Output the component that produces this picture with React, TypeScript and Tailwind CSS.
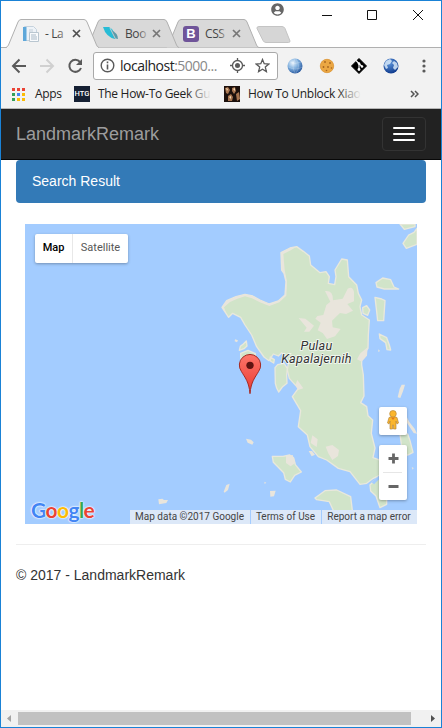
import React from "react";
import { FaUserCircle } from "react-icons/fa";

const UI = "font-['Open_Sans','Noto_Sans',sans-serif]";
const GREY = "#5a5a5a";

function Tab({ active, title, icon, z, fade }: { active?: boolean; title: string; icon: React.ReactNode; z: string; fade: string }) {
  return (
    <div className={"relative -mr-[13px] h-[29px] w-[93px] shrink-0 " + z}>
      <svg className="absolute inset-0" width="93" height="29" viewBox="0 0 93 29">
        <path
          d="M0 28.5 Q1.5 28 2.5 26 L12 3 Q13 .5 15 .5 H78 Q80 .5 81 3 L90.500 26 Q91.500 28.500 93 28.500"
          fill={active ? "#f2f2f2" : "#d9d9d9"}
          stroke="#b0b0b0"
        />
        {active && <path d="M1 28.500H92" stroke="#f2f2f2" />}
      </svg>
      <div className="relative flex h-[29px] items-center pl-[17px]">
        <span className="flex h-4 w-4 shrink-0">{icon}</span>
        <span className="relative ml-[6px] w-[21px] whitespace-nowrap text-[12px] leading-4 tracking-[-0.4px] text-[#444]">
          {title}
          <span className={"absolute inset-y-0 -right-1 w-3 bg-gradient-to-r from-transparent " + fade} />
        </span>
        <svg className="ml-[6px] shrink-0" width="9" height="9" viewBox="0 0 9 9">
          <path d="M1 1l7 7M8 1L1 8" stroke={active ? "#505050" : "#777"} strokeWidth="1.7" />
        </svg>
      </div>
    </div>
  );
}

function TabStrip() {
  return (
    <div className="flex h-[47px] shrink-0 items-start border-b border-[#b0b0b0] bg-white">
      <div className="-mb-px flex shrink-0 pl-[5px] pt-[18px]">
        <Tab
          active
          z="z-30"
          title="- La"
          fade="to-[#f2f2f2]"
          icon={
            <svg width="16" height="16" viewBox="0 0 16 16">
              <path d="M1.500 .5h9l3 3v11h-12z" fill="#eef3f8" stroke="#c5d2dd" />
              <path d="M0 1h3.500v14H0z" fill="#5fa8da" />
              <path d="M6 4h4M6 6h4" stroke="#c3ced8" />
              <path d="M6.500 6.500h9v9h-9z" fill="#f8fafc" stroke="#b9c6d0" />
              <path d="M8 9h5M8 11h6M8 13h6" stroke="#a9b9c7" />
            </svg>
          }
        />
        <Tab
          z="z-20"
          title="Boo"
          fade="to-[#d9d9d9]"
          icon={
            <svg width="16" height="16" viewBox="0 0 16 16">
              <path d="M0 1h6q4 2 5 6l1 6Q3 11 0 1z" fill="#27bcd6" />
              <path d="M8 4q7 3 7 9l-4-1z" fill="#5b9aa9" />
              <path d="M7 2l5 10" stroke="#d9d9d9" strokeWidth=".8" />
            </svg>
          }
        />
        <Tab
          z="z-10"
          title="CSS"
          fade="to-[#d9d9d9]"
          icon={<span className="flex h-4 w-4 items-center justify-center rounded-[3px] bg-[#6f5499] font-['Liberation_Sans',sans-serif] text-[13px] font-bold leading-none text-white">B</span>}
        />
      </div>
      <svg className="-mr-[30px] ml-[10px] mt-[25px] shrink-0" width="36" height="18" viewBox="0 0 36 18">
        <path d="M3 .5h23q2 0 3 2l5 12.500q0 1.500-1.500 1.500H10q-2 0-3-2L1 2.500Q.5 .5 3 .5z" fill="#d6d6d6" stroke="#c4c4c4" />
      </svg>
      <div className="ml-auto mr-[17px] flex shrink-0">
        <FaUserCircle className="mt-[2px] shrink-0 text-[#666]" size={13} />
        <svg className="ml-[38px] mt-[8px] shrink-0" width="102" height="12" viewBox="0 0 102 12">
          <path d="M0 6.500h10M45.500 1.500h9v9h-9zM91 1l10 10M101 1l-10 10" fill="none" stroke="#111" />
        </svg>
      </div>
    </div>
  );
}

function Toolbar() {
  return (
    <div className="flex h-[35px] shrink-0 items-center bg-[#f2f2f2]">
      <svg className="ml-[10px] shrink-0" width="74" height="18" viewBox="0 0 74 18" fill="none">
        <path d="M15 9H2.500M8.500 2.500L2 9l6.500 6.500" stroke={GREY} strokeWidth="2" />
        <path d="M29 9h12.500M35.500 2.500L42 9l-6.500 6.500" stroke="#d0d0d0" strokeWidth="2" />
        <path d="M69 5A6 6 0 1 0 70 11" stroke={GREY} strokeWidth="2" />
        <path d="M71 2v6h-6z" fill={GREY} />
      </svg>
      <div className="ml-2 flex h-[28px] w-[185px] shrink-0 items-center rounded-[3px] border border-[#a9a9a9] bg-white">
        <svg className="ml-[6px] shrink-0" width="15" height="15" viewBox="0 0 15 15" fill="none" stroke={GREY}>
          <circle cx="7.500" cy="7.500" r="6.300" strokeWidth="1.400" />
          <path d="M7.500 6.500v5M7.500 3.500v1.700" strokeWidth="1.600" />
        </svg>
        <span className="ml-[5px] w-[105px] whitespace-nowrap text-[14px] leading-5 tracking-[-0.5px] text-[#222]">
          localhost<span className="text-[#888]">:5000...</span>
        </span>
        <svg className="ml-[5px] shrink-0" width="15" height="15" viewBox="0 0 15 15" fill="none" stroke={GREY}>
          <circle cx="7.500" cy="7.500" r="5" strokeWidth="1.300" />
          <circle cx="7.500" cy="7.500" r="2.500" fill={GREY} stroke="none" />
          <path d="M7.500 0v2.500M7.500 12.500V15M0 7.500h2.500M12.500 7.500H15" strokeWidth="1.300" />
        </svg>
        <svg className="ml-[10px] shrink-0" width="15" height="15" viewBox="0 0 15 15">
          <path d="M7.500 1.500l1.700 4.200 4.600.4-3.500 3 1.100 4.500-3.900-2.400-3.900 2.400 1.100-4.500-3.500-3 4.600-.4z" fill="none" stroke={GREY} strokeWidth="1.300" />
        </svg>
      </div>
      <svg className="ml-[9px] shrink-0" width="152" height="18" viewBox="0 0 152 18">
        <defs>
          <radialGradient id="globe" cx=".35" cy=".3" r=".75">
            <stop offset="0" stopColor="#e8f3fc" />
            <stop offset=".5" stopColor="#7eaedd" />
            <stop offset="1" stopColor="#24559c" />
          </radialGradient>
          <radialGradient id="earth" cx=".4" cy=".3" r=".75">
            <stop offset="0" stopColor="#5d95dc" />
            <stop offset="1" stopColor="#0b3689" />
          </radialGradient>
        </defs>
        <circle cx="8" cy="9" r="7.500" fill="url(#globe)" />
        <path d="M3 5q5 3 11 0M1.500 10q7 4 14 0M8 2q-4 7 0 14M9 2q5 7 0 14" fill="none" stroke="#fff" strokeOpacity=".25" strokeWidth=".8" />
        <circle cx="40" cy="9" r="6.700" fill="#eba743" stroke="#dc9433" strokeWidth=".8" />
        <g fill="#a5641f">
          <circle cx="38" cy="5" r=".9" /><circle cx="43" cy="6" r=".9" /><circle cx="36.500" cy="10" r=".9" />
          <circle cx="41" cy="10" r=".9" /><circle cx="44.500" cy="11" r=".8" /><circle cx="39.500" cy="13.500" r=".8" />
        </g>
        <path d="M72 1.500L79.500 9 72 16.500 64.500 9z" fill="#000" stroke="#000" strokeLinejoin="round" />
        <path d="M69 3.500l3 3v6M72 6.500l3 3" fill="none" stroke="#fff" strokeWidth="1.100" />
        <g fill="#fff"><circle cx="72" cy="6.500" r="1.300" /><circle cx="72" cy="12.500" r="1.400" /><circle cx="75" cy="9.500" r="1.300" /></g>
        <circle cx="104" cy="9" r="7.500" fill="url(#earth)" />
        <path d="M99 4l4-2 2 2-2 3-3 1 1 3-2 1-2-4zM107 4l3 2 1 4-3 3-2-2 1-3-2-2z" fill="#d6e7f8" fillOpacity=".85" />
        <g fill={GREY}><circle cx="137" cy="4" r="1.600" /><circle cx="137" cy="9" r="1.600" /><circle cx="137" cy="14" r="1.600" /></g>
      </svg>
    </div>
  );
}

const APP_COLOURS = ["#ea4335", "#ea4335", "#ea4335", "#34a05a", "#4285f4", "#fbbc05", "#34a05a", "#fbbc05", "#fbbc05"];

function Bookmarks() {
  return (
    <div className="flex h-[26px] shrink-0 items-center border-b border-[#b6b6b6] bg-[#f2f2f2] pb-[3px] text-[12px] leading-4 text-[#222]">
      <div className="ml-[11px] grid grid-cols-3 gap-[2px]">
        {APP_COLOURS.map((c, i) => (
          <span key={i} className="h-[3px] w-[3px]" style={{ background: c }} />
        ))}
      </div>
      <span className="ml-[10px] w-[27px] whitespace-nowrap tracking-[-0.3px]">Apps</span>
      <span className="ml-[12px] flex h-4 w-4 shrink-0 items-center justify-center bg-[#152033] font-['Roboto',sans-serif] text-[7.500px] font-medium text-white">HTG</span>
      <span className="relative ml-[8px] w-[113px] shrink-0 whitespace-nowrap tracking-[-0.3px]">
        The How-To Geek Gu
        <span className="absolute inset-y-0 right-0 w-6 bg-gradient-to-r from-transparent to-[#f2f2f2]" />
      </span>
      <svg className="ml-[13px] shrink-0" width="16" height="16" viewBox="0 0 16 16">
        <path d="M0 0h16v16H0z" fill="#1c100c" />
        <path d="M1 2l3-1 2 3-2 4-2-1zM8 2l3-1 1 4-2 3-2-3zM12 8l3-2 1 7-3 2zM4 10l3-2 2 3-1 4H4z" fill="#a87550" />
        <path d="M2 2l2 1-1 2zM9 3l2-1v3zM5 11l2-1v3z" fill="#f3dcb8" />
      </svg>
      <span className="relative ml-[8px] w-[113px] shrink-0 whitespace-nowrap tracking-[-0.3px]">
        How To Unblock Xiao
        <span className="absolute inset-y-0 right-0 w-6 bg-gradient-to-r from-transparent to-[#f2f2f2]" />
      </span>
      <svg className="ml-auto mr-[22px] shrink-0" width="9" height="8" viewBox="0 0 9 8">
        <path d="M1 1l3 3-3 3M5 1l3 3-3 3" fill="none" stroke="#555" strokeWidth="1.500" />
      </svg>
    </div>
  );
}

function MapDrawing() {
  return (
    <svg className="block h-[300px] w-[392px]" viewBox="-555 12 1176 900">
      <path d="M-555 12H621V912H-555z" fill="#a3ccff" />
      <g fill="#d1e4c9" stroke="#e9e8dc" strokeWidth="4" strokeLinejoin="round">
        <path d="M36 262L50 242 78 230 105 223 128 228 150 240 178 252 205 243 225 225 228 185 222 160 215 150 213 98 240 84 260 80 280 94 298 108 302 135 330 158 348 155 358 170 355 190 374 194 378 170 375 150 395 117 412 120 416 170 440 195 445 220 455 240 450 260 455 285 478 300 475 345 474 385 455 410 455 435 460 465 462 528 452 548 470 560 474 587 488 600 484 640 495 684 489 713 530 728 510 765 490 775 470 790 450 793 420 755 385 745 350 720 325 710 300 680 292 645 265 620 272 572 247 530 265 505 238 475 232 450 236 425 215 398 205 408 190 402 177 422 162 411 140 380 125 345 105 315 92 292 68 280 56 292z" />
        <path d="M195 443L203 434 222 430 232 445 230 465 231 490 218 500 206 516 200 504 196 490z" />
        <path d="M181 411l12 8-2 10-10-6z" />
        <path d="M100 372l9-9 2 15-9 8-14 5 3-12z" />
        <path d="M92 400l22-9 22 10v40l-20 8-22-14z" />
        <path d="M187 709l32 0 20-4 12 9 5 20 18 22-20 10-13 20-15-8-5-20-31-31z" />
        <path d="M315 834l30-22 35-2 42 20 10 83-44-3-20-43-10-22-38-6z" />
        <path d="M480 795l22-22 28 0v80l-20 10-12-35-16-15z" />
        <path d="M570 12h45v8l-32 8zM621 25v48l-32 12-10-15 17-25 16-8z" />
        <path d="M498 188l20-14 24 5 10 22 14 6-43 0-22-6z" />
        <path d="M495 232l20 5 10 5-4 60-18 0 -4-36z" />
        <path d="M458 263l12-6 9 13-6 16-14-6z" />
        <path d="M570 642l23 0 7 20 9 35-15 8-16 0z" />
        <path d="M508 342l22 11 8 22 4 15-11-1-4-21-17-12z" />
      </g>
      <g fill="#e9e5dc">
        <path d="M75 358l9 3-3 6-7-3z" />
        <path d="M36 262L50 242 78 230 105 223 128 228 150 240 178 252 205 243 225 225 228 185 222 160 215 150 213 98 240 84 260 80 242 91 220 102 224 150 231 185 229 227 208 247 178 258 148 246 126 235 105 229 82 236 60 246 42 262 52 288 56 292z" />
        <path d="M345 213q25-3 24 28l29-5 15-30q15-8 19 10v28l-20 8 17 20-21 10-18-3-24 23 2 20 24 5-17 22-24 8-13-18-15-8 9-23-16-12 6-8 18-3 9-30 12-10z" />
        <path d="M266 294l20 2 26 21-14 18h-16l8-12z" />
        <path d="M473 382l-2 25-16 18-14-7 10-18zM262 480l18 25-16 5-8-15z" />
        <path d="M347 680l20-5 20 15-3 18-17 12-12-20zM307 646l16 12-3 23-18-12z" />
        <path d="M228 708l20-3 8 24-14 10-14-10z" />
        <path d="M505 388l5 5-5 3z" />
        <path d="M575 494l10 0-6 20-8 20-8-2 6-26zM590 590l8 16 16 20 7 15-10-2-20-30z" />
        <path d="M108 656l15 3 8 8-4 7-14-6zM296 693l10 0 9 11-10 5zM180 813l17-1-5 17-11 1zM41 815l8-20 10-4-5 19-10 8zM163 785l6 3-5 4zM605 741l6 3-3 5zM-155 838l12-2 5 4 12 0-5 9-22 4z" />
      </g>
      <path d="M489 790q20-25 48-23" fill="none" stroke="#a3ccff" strokeWidth="9" />
      <g className="font-['Roboto',sans-serif]" fontSize="38" fontStyle="italic" fill="#333" stroke="#fff" strokeWidth="5" strokeOpacity=".8" paintOrder="stroke" textAnchor="middle">
        <text x="319" y="391" textLength="95">Pulau</text>
        <text x="319" y="430" textLength="211">Kapalajernih</text>
      </g>
      <defs>
        <linearGradient id="pin" x1="0" y1="0" x2="0" y2="1">
          <stop offset="0" stopColor="#fe7569" />
          <stop offset="1" stopColor="#ea3a31" />
        </linearGradient>
      </defs>
      <path d="M120 521C117 485 105 473 94 454A32 32 0 1 1 146 454C135 473 123 485 120 521z" fill="url(#pin)" stroke="#a52a23" strokeWidth="3" />
      <circle cx="120" cy="436" r="11" fill="#5f1411" />
    </svg>
  );
}

function MapPanel() {
  return (
    <div className="relative mx-[9px] mt-[21px] h-[300px] w-[392px] overflow-hidden font-['Roboto',sans-serif]">
      <MapDrawing />
      <div className="absolute left-[10px] top-[10px] flex h-[29px] items-center rounded-[2px] bg-white text-[11px] shadow-[0_1px_3px_rgba(0,0,0,0.3)]">
        <span className="flex h-full w-[38px] items-center justify-center border-r border-[#e8e8e8] font-medium text-black">Map</span>
        <span className="w-[55px] text-center text-[#565656]">Satellite</span>
      </div>
      <div className="absolute bottom-[89px] right-[10px] flex h-7 w-7 items-center justify-center rounded-[2px] bg-white shadow-[0_1px_3px_rgba(0,0,0,0.3)]">
        <svg className="-mt-[2px]" width="12" height="20" viewBox="0 0 12 20" fill="#fbb62c" stroke="#b98a3c" strokeWidth=".7">
          <path d="M2 7.500Q6 5.500 10 7.500L11.500 13l-1.500 1-1-3v8H6.500v-4h-1v4H3v-8l-1 3-1.500-1z" />
          <circle cx="6" cy="3.800" r="3.300" />
          <path d="M4 7.500h4L6 10z" fill="#e37b17" stroke="none" />
        </svg>
      </div>
      <div className="absolute bottom-[24px] right-[10px] flex h-[55px] w-7 flex-col items-center rounded-[2px] bg-white shadow-[0_1px_3px_rgba(0,0,0,0.3)]">
        <svg width="28" height="55" viewBox="0 0 28 55">
          <path d="M14.500 8.500v10M9.500 13.500h10M9.500 41.500h10" stroke="#666" strokeWidth="2.800" />
          <path d="M4 27.500h19" stroke="#e6e6e6" />
        </svg>
      </div>
      <div className="absolute bottom-[2px] left-[6px] font-['Lato',sans-serif] text-[21px] font-bold leading-6 tracking-[-0.6px] [text-shadow:0_0_2px_white,0_0_2px_white,0_0_1px_white]">
        <span className="text-[#4285f4]">G</span>
        <span className="text-[#ea4335]">o</span>
        <span className="text-[#fbbc05]">o</span>
        <span className="text-[#4285f4]">g</span>
        <span className="text-[#34a853]">l</span>
        <span className="text-[#ea4335]">e</span>
      </div>
      <div className="absolute bottom-0 right-0 flex h-[14px] whitespace-nowrap text-[10px] leading-[14px] text-[#444]">
        <span className="w-[120px] bg-[#dce8f8] pr-px text-center">Map data ©2017 Google</span>
        <span className="ml-px w-[70px] bg-[#dce8f8] pr-px text-center">Terms of Use</span>
        <span className="ml-px w-[95px] bg-[#dce8f8] pr-px text-center">Report a map error</span>
      </div>
    </div>
  );
}

export default function App() {
  return (
    <div className={"flex h-[728px] w-[442px] flex-col overflow-hidden border border-[#1a82d6] bg-white " + UI}>
      <TabStrip />
      <Toolbar />
      <Bookmarks />
      <div className="flex min-h-0 flex-1 flex-col font-['Liberation_Sans',Arial,sans-serif] text-[14px] text-[#333]">
        <nav className="flex h-[51px] shrink-0 items-center justify-between border-b border-[#080808] bg-[#222] pl-[15px] pr-[15px]">
          <span className="text-[18px] leading-5 text-[#9d9d9d]">LandmarkRemark</span>
          <div className="flex h-[34px] w-[44px] flex-col items-center justify-center gap-1 rounded border border-[#333]">
            <span className="h-[2px] w-[22px] rounded-[1px] bg-white" />
            <span className="h-[2px] w-[22px] rounded-[1px] bg-white" />
            <span className="h-[2px] w-[22px] rounded-[1px] bg-white" />
          </div>
        </nav>
        <main className="flex-1 px-[15px]">
          <div className="flex h-[43px] items-center rounded bg-[#337ab7] px-4 text-white">Search Result</div>
          <MapPanel />
          <hr className="mt-[20px] border-t border-[#eee]" />
          <p className="mt-[20px] leading-5">© 2017 - LandmarkRemark</p>
        </main>
        <div className="flex h-[17px] shrink-0 items-center bg-[#f1f1f1]">
          <svg width="17" height="17" viewBox="0 0 17 17"><path d="M10 5v7L6 8.500z" fill="#a3a3a3" /></svg>
          <div className="h-[13px] w-[393px] bg-[#c1c1c1]" />
          <svg className="ml-auto" width="17" height="17" viewBox="0 0 17 17"><path d="M7 5v7l4-3.500z" fill="#505050" /></svg>
        </div>
      </div>
    </div>
  );
}
